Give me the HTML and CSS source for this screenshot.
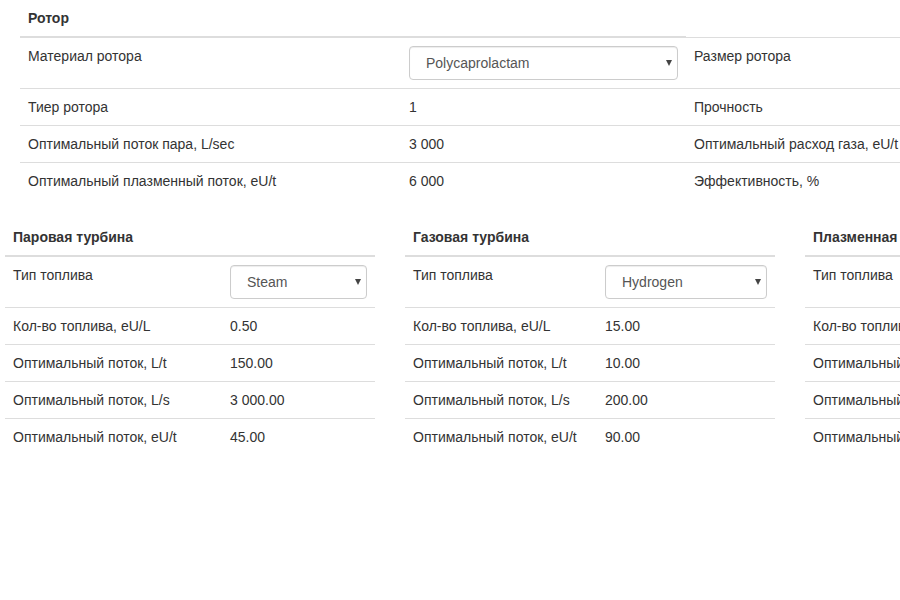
FILE: index.html
```html
<!DOCTYPE html>
<html lang="ru">
<head>
<meta charset="utf-8">
<meta name="viewport" content="width=device-width, initial-scale=1">
<title>Ротор</title>
<link rel="stylesheet" href="styles.css">
</head>
<body>
<main class="page">
  <section class="rotor">
    <table class="table">
      <colgroup><col class="col-rotor-label"><col class="col-rotor-value"><col class="col-rotor-value"><col></colgroup>
      <thead>
        <tr><th colspan="2">Ротор</th></tr>
      </thead>
      <tbody>
        <tr>
          <td><label for="material">Материал ротора</label></td>
          <td><div class="picker"><select id="material" class="select"><option>Polycaprolactam</option></select></div></td>
          <td>Размер ротора</td><td></td>
        </tr>
        <tr><td>Тиер ротора</td><td>1</td><td>Прочность</td><td></td></tr>
        <tr><td>Оптимальный поток пара, L/sec</td><td>3 000</td><td>Оптимальный расход газа, eU/t</td><td></td></tr>
        <tr><td>Оптимальный плазменный поток, eU/t</td><td>6 000</td><td>Эффективность, %</td><td></td></tr>
      </tbody>
    </table>
  </section>

  <div class="turbines">
    <table class="table">
      <colgroup><col class="col-steam-label"><col></colgroup>
      <thead><tr><th colspan="2">Паровая турбина</th></tr></thead>
      <tbody>
        <tr>
          <td><label for="steam">Тип топлива</label></td>
          <td><div class="picker"><select id="steam" class="select"><option>Steam</option></select></div></td>
        </tr>
        <tr><td>Кол-во топлива, eU/L</td><td>0.50</td></tr>
        <tr><td>Оптимальный поток, L/t</td><td>150.00</td></tr>
        <tr><td>Оптимальный поток, L/s</td><td>3 000.00</td></tr>
        <tr><td>Оптимальный поток, eU/t</td><td>45.00</td></tr>
      </tbody>
    </table>

    <table class="table">
      <colgroup><col class="col-gas-label"><col></colgroup>
      <thead><tr><th colspan="2">Газовая турбина</th></tr></thead>
      <tbody>
        <tr>
          <td><label for="gas">Тип топлива</label></td>
          <td><div class="picker"><select id="gas" class="select"><option>Hydrogen</option></select></div></td>
        </tr>
        <tr><td>Кол-во топлива, eU/L</td><td>15.00</td></tr>
        <tr><td>Оптимальный поток, L/t</td><td>10.00</td></tr>
        <tr><td>Оптимальный поток, L/s</td><td>200.00</td></tr>
        <tr><td>Оптимальный поток, eU/t</td><td>90.00</td></tr>
      </tbody>
    </table>

    <table class="table">
      <colgroup><col class="col-gas-label"><col></colgroup>
      <thead><tr><th colspan="2">Плазменная</th></tr></thead>
      <tbody>
        <tr class="row-fuel"><td>Тип топлива</td><td></td></tr>
        <tr><td>Кол-во топлива, eU/L</td><td></td></tr>
        <tr><td>Оптимальный поток, L/t</td><td></td></tr>
        <tr><td>Оптимальный поток, L/s</td><td></td></tr>
        <tr><td>Оптимальный поток, eU/t</td><td></td></tr>
      </tbody>
    </table>
  </div>
</main>
</body>
</html>
```
FILE: styles.css
```css
* {
  box-sizing: border-box;
}

html {
  scrollbar-width: none;
}

body {
  margin: 0;
  background: #fff;
  color: #333;
  font: 14px/20px "Liberation Sans", Arial, sans-serif;
}

/* The tables keep a readable width; narrower windows scroll sideways. */
.page {
  min-width: 1180px;
  padding: 0 5px;
}

.rotor {
  padding: 0 15px;
  margin-bottom: 20px;
}

.turbines {
  display: grid;
  grid-template-columns: repeat(3, 1fr);
  align-items: start;
  gap: 30px;
}

.table {
  width: 100%;
  table-layout: fixed;
  border-collapse: collapse;
}

.table th,
.table td {
  padding: 8px;
  text-align: left;
  vertical-align: top;
}

.table th {
  border-bottom: 2px solid #ddd;
}

.table td {
  border-top: 1px solid #ddd;
}

.col-rotor-label {
  width: 381px;
}

.col-rotor-value {
  width: 25%;
}

.col-steam-label {
  width: 217px;
}

.col-gas-label {
  width: 192px;
}

.row-fuel {
  height: 51px;
}

.picker {
  position: relative;
}

.picker::after {
  content: "";
  position: absolute;
  top: 14px;
  right: 6px;
  width: 6px;
  height: 6px;
  background: #444;
  clip-path: polygon(0 0, 100% 0, 50% 100%);
  pointer-events: none;
}

.select {
  display: block;
  appearance: none;
  width: 100%;
  height: 34px;
  margin: 0;
  padding: 6px 16px;
  border: 1px solid #ccc;
  border-radius: 4px;
  background: #fff;
  box-shadow: inset 0 1px 1px rgba(0, 0, 0, 0.075);
  color: #555;
  font: inherit;
}
```
